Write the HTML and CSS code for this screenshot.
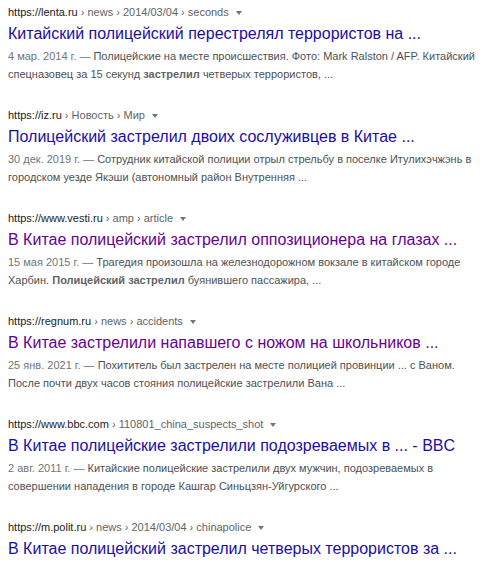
FILE: index.html
```html
<!DOCTYPE html>
<html lang="ru">
<head>
  <meta charset="UTF-8" />
  <meta name="viewport" content="width=device-width, initial-scale=1.0" />
  <title>Результаты поиска</title>
  <link rel="stylesheet" href="styles.css">
</head>
<body>
  <div class="results">
    <div class="result">
      <div class="cite">https://lenta.ru <span class="path">› news › 2014/03/04 › seconds</span> <span class="arrow"></span></div>
      <a class="title" href="#">Китайский полицейский перестрелял террористов на ...</a>
      <div class="snippet"><span class="date">4 мар. 2014 г. — </span>Полицейские на месте происшествия. Фото: Mark Ralston / AFP. Китайский спецназовец за 15 секунд <b>застрелил</b> четверых террористов, ...</div>
    </div>

    <div class="result">
      <div class="cite">https://iz.ru <span class="path">› Новость › Мир</span> <span class="arrow"></span></div>
      <a class="title" href="#">Полицейский застрелил двоих сослуживцев в Китае ...</a>
      <div class="snippet"><span class="date">30 дек. 2019 г. — </span>Сотрудник китайской полиции отрыл стрельбу в поселке Итулихэчжэнь в городском уезде Якэши (автономный район Внутренняя ...</div>
    </div>

    <div class="result">
      <div class="cite">https://www.vesti.ru <span class="path">› amp › article</span> <span class="arrow"></span></div>
      <a class="title visited" href="#">В Китае полицейский застрелил оппозиционера на глазах ...</a>
      <div class="snippet"><span class="date">15 мая 2015 г. — </span>Трагедия произошла на железнодорожном вокзале в китайском городе Харбин. <b>Полицейский застрелил</b> буянившего пассажира, ...</div>
    </div>

    <div class="result">
      <div class="cite">https://regnum.ru <span class="path">› news › accidents</span> <span class="arrow"></span></div>
      <a class="title visited" href="#">В Китае застрелили напавшего с ножом на школьников ...</a>
      <div class="snippet"><span class="date">25 янв. 2021 г. — </span>Похититель был застрелен на месте полицией провинции ... с Ваном. После почти двух часов стояния полицейские застрелили Вана ...</div>
    </div>

    <div class="result">
      <div class="cite">https://www.bbc.com <span class="path">› 110801_china_suspects_shot</span> <span class="arrow"></span></div>
      <a class="title" href="#">В Китае полицейские застрелили подозреваемых в ... - BBC</a>
      <div class="snippet"><span class="date">2 авг. 2011 г. — </span>Китайские полицейские застрелили двух мужчин, подозреваемых в совершении нападения в городе Кашгар Синьцзян-Уйгурского ...</div>
    </div>

    <div class="result">
      <div class="cite">https://m.polit.ru <span class="path">› news › 2014/03/04 › chinapolice</span> <span class="arrow"></span></div>
      <a class="title" href="#">В Китае полицейский застрелил четверых террористов за ...</a>
    </div>
  </div>
</body>
</html>
```

FILE: styles.css
```css
body {
  font-family: "Liberation Sans", Arial, sans-serif;
  background-color: #fff;
  margin: 0;
  padding: 1px 8px;
}

.result {
  margin-bottom: 21px;
}

.cite {
  font-size: 11px;
  line-height: 22px;
  color: #202124;
  white-space: nowrap;
}

.cite .path {
  color: #5f6368;
}

.arrow {
  display: inline-block;
  width: 0;
  height: 0;
  margin-left: 4px;
  vertical-align: middle;
  border-left: 3px solid transparent;
  border-right: 3px solid transparent;
  border-top: 4px solid #70757a;
}

.title {
  display: block;
  font-size: 16px;
  line-height: 22px;
  color: #1a0dab;
  text-decoration: none;
  white-space: nowrap;
}

.title.visited {
  color: #660099;
}

.snippet {
  margin-top: 2px;
  font-size: 11px;
  line-height: 18px;
  color: #4d5156;
}

.snippet .date {
  color: #70757a;
}

.snippet b {
  color: #5f6368;
  font-weight: bold;
}
```
